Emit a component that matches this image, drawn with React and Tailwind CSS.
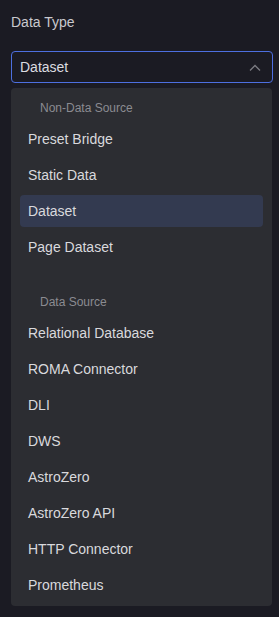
import React from "react";

const groups = [
  { title: "Non-Data Source", items: ["Preset Bridge", "Static Data", "Dataset", "Page Dataset"] },
  {
    title: "Data Source",
    items: [
      "Relational Database",
      "ROMA Connector",
      "DLI",
      "DWS",
      "AstroZero",
      "AstroZero API",
      "HTTP Connector",
      "Prometheus",
    ],
  },
];

export default function App() {
  return (
    <div
      className="w-[279px] h-[617px] bg-[#1b1b23] pl-[11px] pt-[12px]"
      style={{ fontFamily: '"Liberation Sans", Arial, sans-serif' }}
    >
      <div className="h-[20px] leading-[20px] text-[14px] text-[#c9c9ce]">Data Type</div>
      <div className="mt-[19px] w-[262px] h-[32px] rounded-[4px] border border-[#4d6fe0] flex items-center justify-between pl-[8px] pr-[11px]">
        <span className="text-[14px] text-[#dcdce0]">Dataset</span>
        <svg width="12" height="7" viewBox="0 0 12 7" fill="none">
          <polyline points="1,6.5 6,1.5 11,6.5" stroke="#7b7b82" strokeWidth="1.3" />
        </svg>
      </div>
      <div className="mt-[5px] w-[261px] rounded-[4px] bg-[#2c2d32] py-[3px]">
        {groups.map((g, gi) => (
          <div key={g.title} className={gi > 0 ? "pt-[20px]" : ""}>
            <div className="h-[30px] pt-[4px] flex items-center pl-[29px] text-[12px] text-[#8b8b91]">{g.title}</div>
            {g.items.map((it) => (
              <div key={it} className="h-[36px] py-[2px] px-[9px]">
                <div
                  className={
                    "h-full rounded-[4px] flex items-center pl-[8px] text-[14px] text-[#d9d9dd] " +
                    (it === "Dataset" ? "bg-[#333a50]" : "")
                  }
                >
                  {it}
                </div>
              </div>
            ))}
          </div>
        ))}
      </div>
    </div>
  );
}
